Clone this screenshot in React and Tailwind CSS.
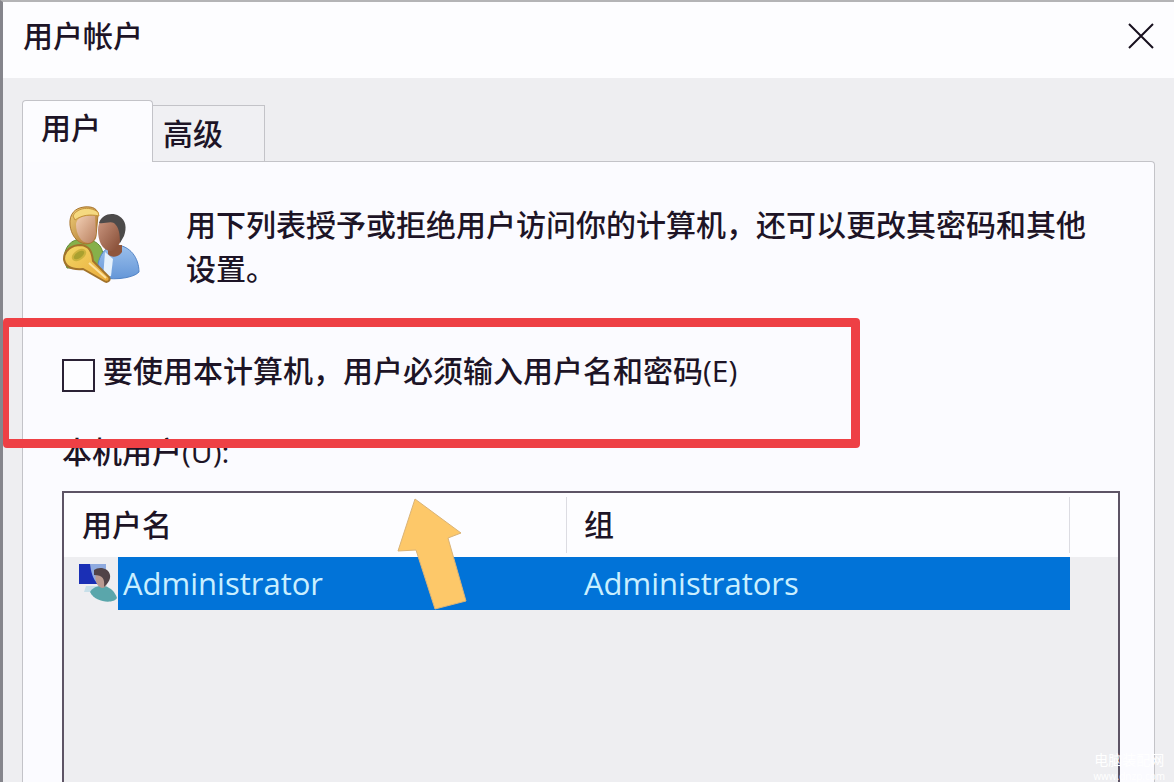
import React, { useState } from 'react'

const UsersIcon = () => (
  <svg viewBox="0 0 78 80" className="h-20 w-[78px] shrink-0" aria-hidden="true">
    <defs>
      <linearGradient id="hair" x1="0" y1="0" x2="1" y2="1">
        <stop offset="0" stopColor="#f3d27a" />
        <stop offset="1" stopColor="#a3692a" />
      </linearGradient>
      <linearGradient id="skinLight" x1="0" y1="0" x2="1" y2="1">
        <stop offset="0" stopColor="#f2cfb4" />
        <stop offset="1" stopColor="#b9805f" />
      </linearGradient>
      <linearGradient id="skinDark" x1="0" y1="0" x2="1" y2="1">
        <stop offset="0" stopColor="#cf9c85" />
        <stop offset="1" stopColor="#7f452e" />
      </linearGradient>
      <linearGradient id="shirt" x1="0" y1="0" x2="0" y2="1">
        <stop offset="0" stopColor="#9cc0ec" />
        <stop offset="1" stopColor="#6597d8" />
      </linearGradient>
      <linearGradient id="key" x1="0" y1="0" x2="1" y2="1">
        <stop offset="0" stopColor="#f3d967" />
        <stop offset="1" stopColor="#e9a838" />
      </linearGradient>
    </defs>
    <path d="M2 57C2 44 9 36 20 36c13 0 21 6 21 17l-3 12H5Z" fill="#86b04a" stroke="#5f8a35" />
    <path d="M8 22C7 11 13 5 22 4c9-1 14 2 14 8l-2 21c-1 6-6 8-10 8C14 40 9 31 8 22Z" fill="url(#hair)" stroke="#a8752f" />
    <path d="M14 21c1-6 6-9 19-8l1 17c-1 7-4 10-8 10-7 0-12-9-12-19Z" fill="url(#skinLight)" />
    <path d="M11 13C14 6 26 2 36 9l1 4c-9-2-17-1-24 4Z" fill="#f5d980" stroke="#c4913c" />
    <path d="M36 73c-2-14 3-28 17-31 15 0 24 13 24 27-6 7-31 9-41 4Z" fill="url(#shirt)" stroke="#5384c6" />
    <path d="M43 49l8 7-2 17-8 2Z" fill="#e6f1fb" />
    <path d="M46 42h14v7c-4 6-11 6-14 2Z" fill="#8f553c" />
    <path d="M36 27c0-10 7-16 14-15 9 0 13 7 11 17-2 12-7 19-13 19-8-1-12-10-12-21Z" fill="url(#skinDark)" />
    <path d="M37 20c3-9 13-11 20-7 7 4 8 12 5 20l-4 7c0-9-1-16-6-20-4-2-10 1-15 0Z" fill="#4c4a4a" />
    <path d="M2 56c0-9 8-14 17-14 8 1 11 6 12 16l16 16c2 4-2 6-5 4L21 66C9 67 3 63 2 56Z" fill="url(#key)" stroke="#a2732b" strokeWidth="2" />
    <path d="M27 60l17 15" stroke="#fce2a0" strokeWidth="2" />
    <ellipse cx="17" cy="52" rx="7" ry="4" fill="#a9a02f" stroke="#cdb33e" strokeWidth="2" transform="rotate(-35 17 52)" />
  </svg>
)

const AccountIcon = () => (
  <svg viewBox="0 0 40 40" className="h-10 w-10 shrink-0" aria-hidden="true">
    <path d="M1 0h27v20H1Z" fill="#1a2fb5" />
    <path d="M12 0h16v20h-8C15 16 13 8 12 0Z" fill="#8faadf" />
    <path d="M8 22h14l-3 6H6Z" fill="#c7dfe9" />
    <path d="M12 28c3-5 9-7 15-6 6 2 10 6 12 12-3 6-22 5-27-6Z" fill="#5aa6ab" />
    <path d="M18 9c4-4 12-2 12 5s-3 10-6 10c-5-1-8-8-6-15Z" fill="#b99a91" />
    <path d="M16 6c5-4 15-2 16 5 1 5-3 9-6 12 1-8-1-12-10-12Z" fill="#514348" />
  </svg>
)

const PointerArrow = () => (
  <svg viewBox="0 0 70 112" className="pointer-events-none absolute left-[333px] top-[5px] h-28 w-[70px]" aria-hidden="true">
    <path d="M18 1 64 35 51 40 69 103 38 111 19 52 1 53Z" fill="#fdc869" stroke="#d9b377" />
  </svg>
)

const accounts = [{ name: 'Administrator', group: 'Administrators' }]

const App = () => {
  const [mustLogin, setMustLogin] = useState(false)

  return (
    <div className="relative flex h-screen flex-col overflow-hidden border-l-[3px] border-t-2 border-l-[#85858c] border-t-[#b4b4b6] bg-[#eeeef1] font-['Open_Sans','Noto_Sans_CJK_SC',sans-serif] text-3xl font-medium text-[#1d1426]">
      <header className="flex h-19 shrink-0 items-center justify-between bg-[#fdfdff] px-5 pb-2">
        <h1 className="font-medium">用户帐户</h1>
        <button type="button" aria-label="关闭" className="flex items-center">
          <svg viewBox="0 0 26 26" className="h-[26px] w-[26px]" fill="none" stroke="#17101e" strokeWidth="2">
            <path d="M1 1 25 25M25 1 1 25" />
          </svg>
        </button>
      </header>

      <main className="flex flex-1 flex-col px-[19px] pt-[22px]">
        <div role="tablist" className="flex items-end">
          <button
            type="button"
            role="tab"
            aria-selected="true"
            className="z-10 -mb-px h-[62px] w-[131px] rounded-t border border-b-0 border-[#c3c3c8] bg-[#fcfcff] pb-2 pl-[18px] text-left"
          >
            用户
          </button>
          <button
            type="button"
            role="tab"
            aria-selected="false"
            className="h-14 w-28 border border-b-0 border-l-0 border-[#c3c3c8] bg-[#f0f0f3] pl-[10px] text-left"
          >
            高级
          </button>
        </div>

        <section role="tabpanel" className="flex flex-1 flex-col rounded-tr border border-b-0 border-[#c3c3c8] bg-[#fbfbff] pl-[39px] pr-[34px] pt-[41px]">
          <div className="flex gap-[46px] pr-5">
            <UsersIcon />
            <p className="leading-[44px]">
              用下列表授予或拒绝用户访问你的计算机，还可以更改其密码和其他设置。
            </p>
          </div>

          {/* Login requirement */}
          <div className="relative mt-[27px] flex h-[130px] items-center pb-6">
            <input
              id="must-login"
              type="checkbox"
              checked={mustLogin}
              onChange={(e) => setMustLogin(e.target.checked)}
              className="mt-2 h-[33px] w-[33px] shrink-0 appearance-none border-2 border-[#2a2135] bg-[#fdfdff] checked:bg-[#0173d8]"
            />
            <label htmlFor="must-login" className="pl-2">
              要使用本计算机，用户必须输入用户名和密码(E)
            </label>
            <div className="pointer-events-none absolute inset-y-0 -left-[59px] right-[260px] rounded-sm border-[9px] border-l-[6px] border-[#ee4045]" />
          </div>

          {/* User list */}
          <h2 id="user-list" className="-mt-4 h-[59px] font-medium leading-10">本机用户(U):</h2>
          <div className="relative flex-1 border-2 border-b-0 border-[#5d5465] bg-[#eeeef1]">
            <table aria-labelledby="user-list" className="w-full table-fixed text-left">
              <colgroup>
                <col />
                <col />
                <col className="w-12" />
              </colgroup>
              <thead className="bg-[#fdfdff]">
                <tr className="h-16">
                  <th className="p-0 font-medium">
                    <div className="flex h-14 items-center border-r border-[#dcdce2] pl-[18px]">用户名</div>
                  </th>
                  <th className="p-0 font-medium">
                    <div className="flex h-14 items-center border-r border-[#dcdce2] pl-[17px]">组</div>
                  </th>
                  <td />
                </tr>
              </thead>
              <tbody>
                {accounts.map((account) => (
                  <tr key={account.name} className="text-[31px] leading-10 text-[#c9efff]">
                    <td className="p-0">
                      <div className="flex items-center pl-[14px]">
                        <AccountIcon />
                        <span className="flex h-[53px] flex-1 items-center bg-[#0173d8] pb-0.5 pl-[5px]">{account.name}</span>
                      </div>
                    </td>
                    <td className="bg-[#0173d8] pb-0.5 pl-[17px] pr-0 pt-0">{account.group}</td>
                    <td />
                  </tr>
                ))}
              </tbody>
            </table>
            <PointerArrow />
          </div>
        </section>
      </main>

      <div className="pointer-events-none absolute bottom-0 right-[9px] text-center font-normal text-white">
        <p className="text-sm leading-5">电脑装配网</p>
        <p className="text-[10px] leading-3">www.dnzp.com</p>
      </div>
    </div>
  )
}

export default App
